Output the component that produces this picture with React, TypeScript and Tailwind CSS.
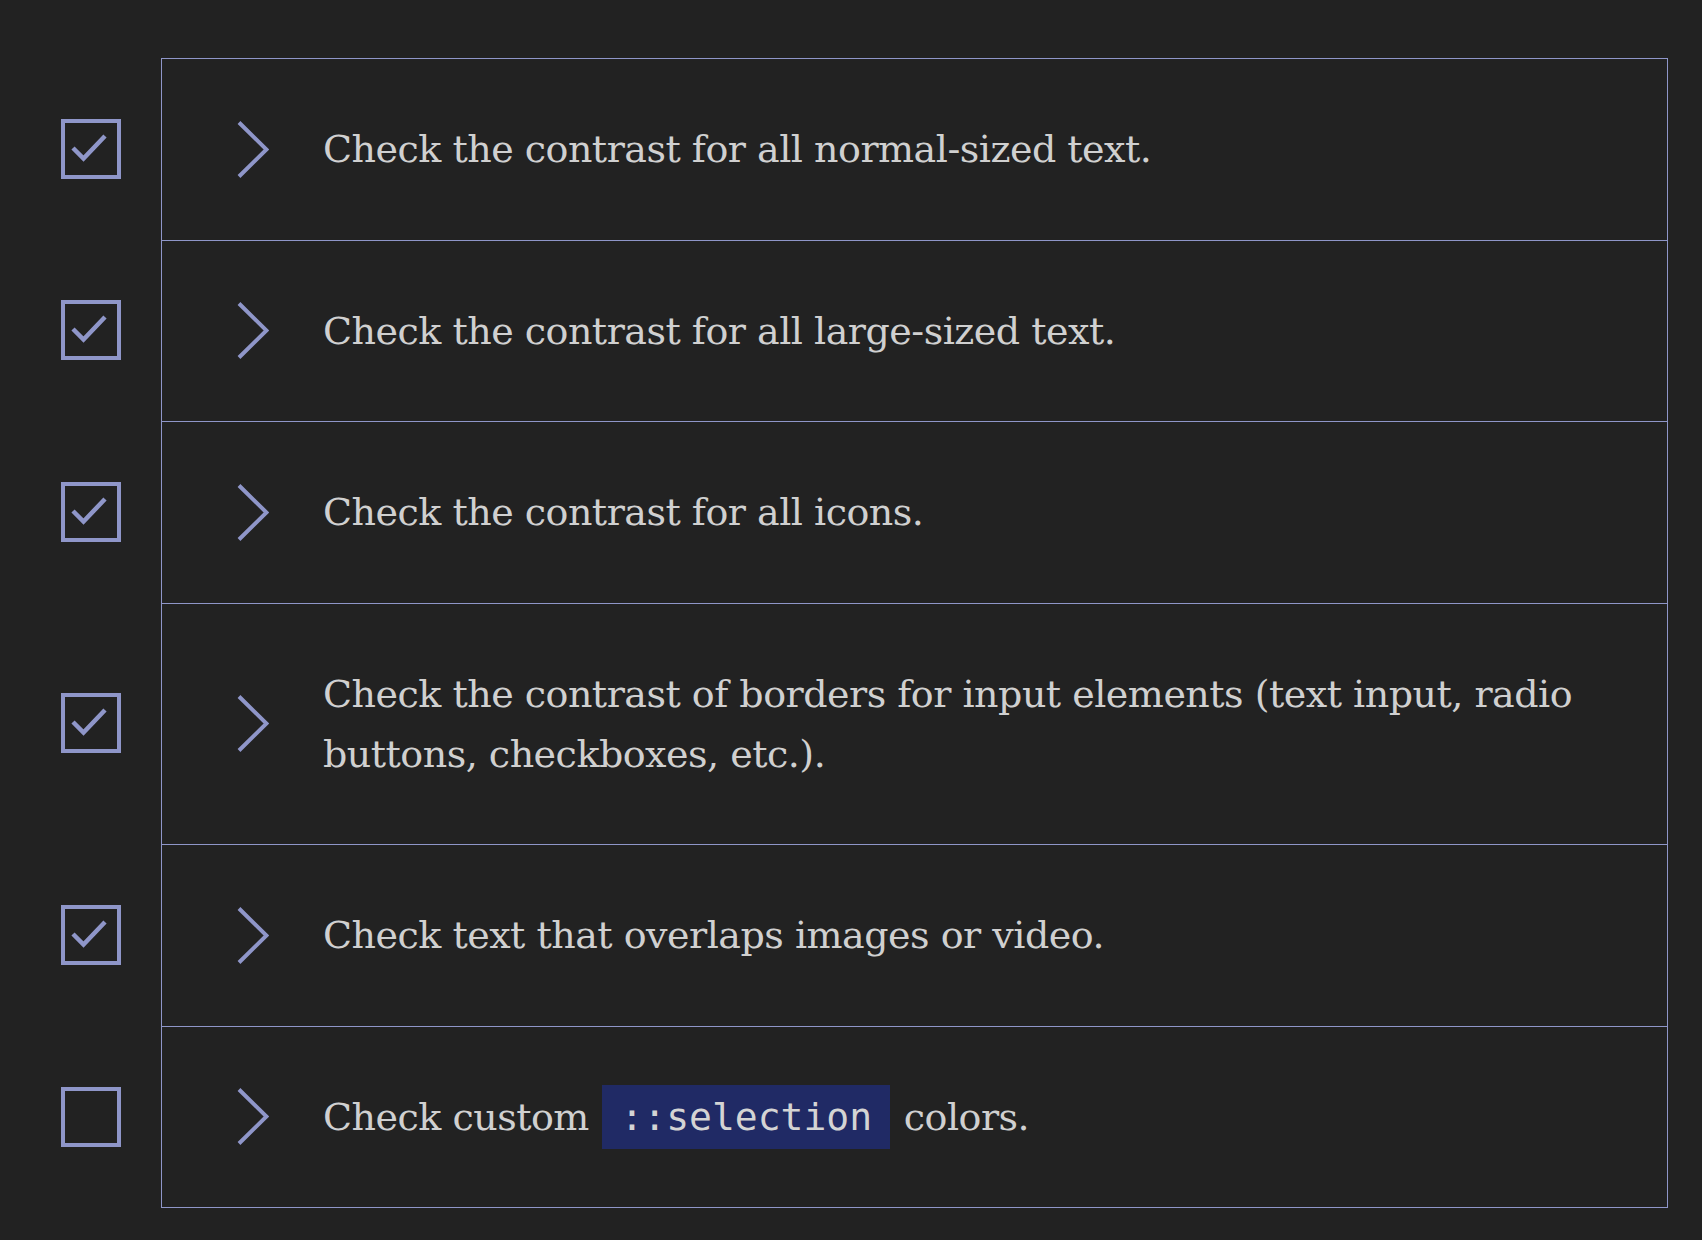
const ITEMS: { checked: boolean; text: React.ReactNode }[] = [
  { checked: true, text: "Check the contrast for all normal-sized text." },
  { checked: true, text: "Check the contrast for all large-sized text." },
  { checked: true, text: "Check the contrast for all icons." },
  {
    checked: true,
    text: "Check the contrast of borders for input elements (text input, radio buttons, checkboxes, etc.).",
  },
  { checked: true, text: "Check text that overlaps images or video." },
  {
    checked: false,
    text: (
      <>
        Check custom{" "}
        <code className="mx-[2px] bg-[#202a65] px-[18px] py-[10px] font-['DejaVu_Sans_Mono',monospace] text-[38px] tracking-normal text-[#d4d4d4]">
          ::selection
        </code>{" "}
        colors.
      </>
    ),
  },
];

function Checkbox({ checked }: { checked: boolean }) {
  return (
    <div className="relative h-[60px] w-[60px] shrink-0 border-4 border-[#8f96c9]">
      {checked && (
        <svg
          className="absolute -left-1 -top-1"
          width="60"
          height="60"
          viewBox="0 0 60 60"
          fill="none"
        >
          <polyline
            points="12,29 22.5,39.5 44,17"
            stroke="#8f96c9"
            strokeWidth="4.5"
            strokeLinecap="butt"
            strokeLinejoin="miter"
          />
        </svg>
      )}
    </div>
  );
}

function Chevron() {
  return (
    <svg width="32" height="57" viewBox="0 0 32 57" fill="none" className="shrink-0">
      <polyline
        points="2,1.5 29.5,28.5 2,55.5"
        stroke="#8f96c9"
        strokeWidth="4"
        strokeLinecap="butt"
        strokeLinejoin="miter"
      />
    </svg>
  );
}

export default function App() {
  return (
    <div className="h-[1240px] w-full overflow-hidden bg-[#222222] pr-[34px] pt-[58px] font-['DejaVu_Serif',serif] text-[38px] leading-[60px] tracking-[-0.5px] text-[#d0d0d0]">
      <ul className="flex flex-col">
        {ITEMS.map((item, i) => (
          <li key={i} className="flex items-center">
            <div className="flex w-[161px] shrink-0 pl-[61px]">
              <Checkbox checked={item.checked} />
            </div>
            <div
              className={
                "flex flex-1 items-center gap-[54px] border-x border-t border-[#8f96c9] py-[60.25px] pl-[75px] pr-[60px]" +
                (i === ITEMS.length - 1 ? " border-b" : "")
              }
            >
              <Chevron />
              <p>{item.text}</p>
            </div>
          </li>
        ))}
      </ul>
    </div>
  );
}
